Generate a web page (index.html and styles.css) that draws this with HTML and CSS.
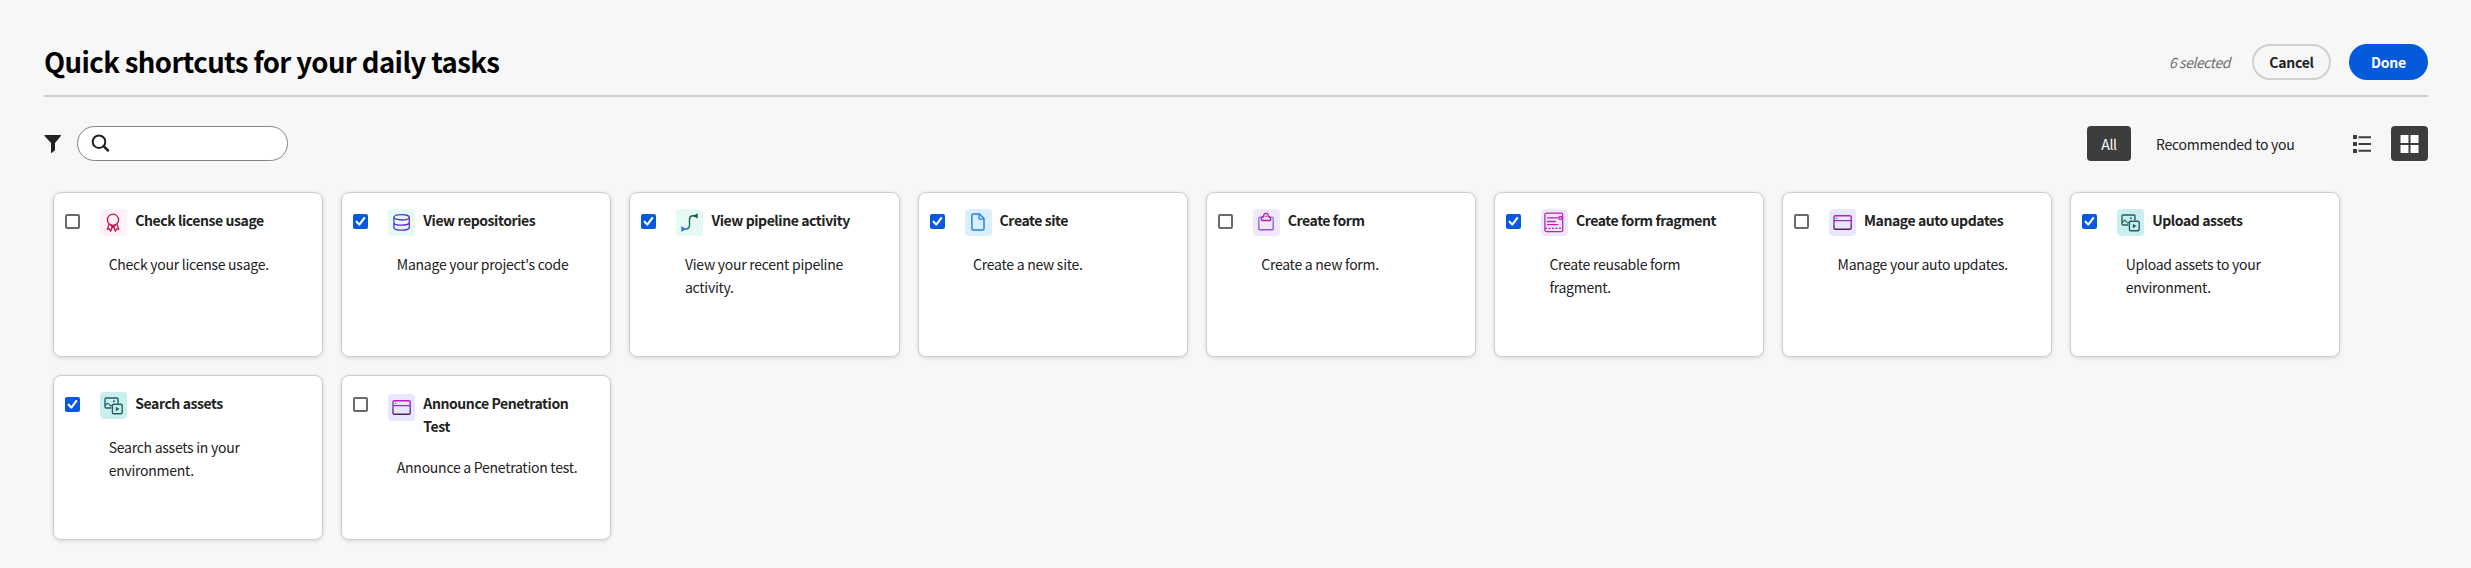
FILE: index.html
```html
<!DOCTYPE html>
<html lang="en">
<head>
<meta charset="utf-8">
<title>Quick shortcuts</title>
<link rel="stylesheet" href="styles.css">
</head>
<body>
<svg class="defs" width="0" height="0" aria-hidden="true">
  <defs>
    <linearGradient id="g-db" x1="0" y1="0" x2="1" y2="1"><stop offset="0" stop-color="#3b4fd0"/><stop offset=".5" stop-color="#6a1fd0"/><stop offset="1" stop-color="#5a35d8"/></linearGradient>
    <linearGradient id="g-pipe" gradientUnits="userSpaceOnUse" x1="6" y1="21" x2="20" y2="5"><stop offset="0" stop-color="#2f6fe0"/><stop offset=".45" stop-color="#17804f"/><stop offset="1" stop-color="#1c4f45"/></linearGradient>
    <linearGradient id="g-form" x1="0" y1="0" x2="0" y2="1"><stop offset="0" stop-color="#6e8cf5"/><stop offset="1" stop-color="#9a4fe0"/></linearGradient>
    <linearGradient id="g-win" gradientUnits="userSpaceOnUse" x1="0" y1="6" x2="0" y2="21"><stop offset="0" stop-color="#c01fb4"/><stop offset=".45" stop-color="#8238b8"/><stop offset="1" stop-color="#541a56"/></linearGradient>
  </defs>
  <symbol id="i-check" viewBox="0 0 15 15"><path d="M3.600 7.700l2.700 2.900 5-6.600" fill="none" stroke="#fff" stroke-width="2.100" stroke-linecap="round" stroke-linejoin="round"/></symbol>
  <symbol id="i-award" viewBox="0 0 27 27"><g fill="none" stroke="#bb1449" stroke-width="1.300" stroke-linejoin="round"><circle cx="13" cy="10.800" r="5.600"/><path d="M9.200 15.200l-2 5 2.100-.2 1.300 2.200 2-5.400M16.800 15.200l2 5-2.100-.2-1.300 2.200-2-5.400M10.400 15.800l2.600 2.800 2.600-2.800"/></g></symbol>
  <symbol id="i-db" viewBox="0 0 27 27"><g fill="none" stroke="url(#g-db)" stroke-width="1.300"><ellipse cx="13.600" cy="8.300" rx="7.700" ry="2.700"/><path d="M5.900 8.300v10.200c0 1.500 3.400 2.700 7.700 2.700s7.700-1.200 7.700-2.700V8.300M5.900 13.400c0 1.500 3.400 2.700 7.700 2.700s7.700-1.200 7.700-2.700"/></g></symbol>
  <symbol id="i-pipe" viewBox="0 0 27 27"><path d="M8 20h1.500c2.200 0 4-1.500 4-3.800V10.500c0-2.200 1.600-3.700 3.800-3.700H19" fill="none" stroke="url(#g-pipe)" stroke-width="1.500"/><path d="M5.300 17l4.600 3-4.600 3z" fill="#3673de"/><path d="M21.700 4.200v5.400L17 7z" fill="#1c5549"/></symbol>
  <symbol id="i-doc" viewBox="0 0 27 27"><g fill="none" stroke="#2680eb" stroke-width="1.500" stroke-linejoin="round"><path d="M8.200 4.900h6.300l4.500 4.700v10.100a1.300 1.300 0 0 1-1.300 1.300H8.200a1.300 1.300 0 0 1-1.300-1.300V6.200a1.300 1.300 0 0 1 1.300-1.300z"/><path d="M14 5v4.200a1 1 0 0 0 1 1h4" stroke-width="1.300"/></g></symbol>
  <symbol id="i-form" viewBox="0 0 27 27"><path d="M8.500 8.300H6.800a1 1 0 0 0-1 1v10.500a1 1 0 0 0 1 1h12.400a1 1 0 0 0 1-1V9.300a1 1 0 0 0-1-1h-1.700" fill="none" stroke="url(#g-form)" stroke-width="1.400"/><path d="M8.200 10.400c0-1.800 1-2.700 2.500-2.900a2.400 2.400 0 1 1 4.600 0c1.500.2 2.500 1.100 2.500 2.900 0 .7-.4 1.100-1 1.100H9.200c-.6 0-1-.4-1-1.100z" fill="#f1e7fb" stroke="#b91ab4" stroke-width="1.300"/><circle cx="13" cy="7.300" r=".8" fill="#b91ab4"/></symbol>
  <symbol id="i-frag" viewBox="0 0 27 27"><g fill="none" stroke="#b626b5" stroke-width="1.300"><rect x="3.900" y="4.100" width="17.800" height="18.500" rx="1.500"/><path d="M6.500 8.800h10.500M6.500 12.500h7.800M6.500 15.700h10.300" stroke-linecap="round"/><path d="M4 19.300h18" stroke-dasharray="2 1.500"/><circle cx="19.300" cy="9" r="1.500"/></g></symbol>
  <symbol id="i-win" viewBox="0 0 27 27"><g fill="none" stroke="url(#g-win)" stroke-width="1.400"><rect x="5" y="6.700" width="17.200" height="13.600" rx="1.300"/><path d="M5 11.700h17.200v.01" stroke-width="1.200"/></g><circle cx="7.500" cy="9.200" r=".8" fill="#2f7df0"/></symbol>
  <symbol id="i-asset" viewBox="0 0 27 27"><g fill="none" stroke="#245e63" stroke-width="1.400" stroke-linejoin="round"><path d="M11.300 16H6.200a1.200 1.200 0 0 1-1.200-1.200V7.200A1.200 1.200 0 0 1 6.200 6h10.600A1.200 1.200 0 0 1 18 7.200v4.300"/><path d="M5 13.500l2.600-2.300 3.300 3 1.200-1.200" stroke-width="1.100"/><rect x="12.400" y="12.200" width="9.800" height="9.600" rx="1.300"/></g><path d="M15.800 14.700v4.600l3.700-2.300z" fill="#245e63"/><circle cx="13.900" cy="9.200" r="1" fill="#245e63"/></symbol>
</svg>

<header class="header">
  <h1 class="title">Quick shortcuts for your daily tasks</h1>
  <span class="count">6 selected</span>
  <button class="btn btn-cancel">Cancel</button>
  <button class="btn btn-done">Done</button>
</header>

<div class="toolbar">
  <svg class="filter" width="18" height="18" viewBox="0 0 18 18"><path d="M1 0h15.400c.6 0 .8.600.4 1L11 8v7.200L7.600 18c-.3.200-.6 0-.6-.3V8L.6 1C.2.600.4 0 1 0z" fill="#222"/></svg>
  <label class="search">
    <svg width="19" height="19" viewBox="0 0 19 19"><circle cx="8" cy="7.700" r="6.300" fill="none" stroke="#222" stroke-width="2"/><path d="M12.600 12.200l4.400 4.300" stroke="#222" stroke-width="2.500" stroke-linecap="round"/></svg>
    <input class="search-input" type="text" aria-label="Search">
  </label>
  <button class="tab tab-active">All</button>
  <button class="tab tab-rec">Recommended to you</button>
  <button class="view view-list"><svg width="18" height="18" viewBox="0 0 18 18" fill="#3d3d3d"><path d="M0 0h4v4H0zM0 7h4v4H0zM0 14h4v4H0zM5.500 1.200H18v2H5.500zM5.500 8H18v2H5.500zM5.500 14.800H18v2H5.500z"/></svg></button>
  <button class="view view-active"><svg width="19" height="18" viewBox="0 0 19 18" fill="#fff"><path d="M.5 0h8v8h-8zM10.500 0h8v8h-8zM.5 10h8v8h-8zM10.500 10h8v8h-8z"/></svg></button>
</div>

<main class="grid">
  <article class="card"><span class="box"></span><div class="content"><div class="head"><svg class="icon pink"><use href="#i-award"/></svg><h2 class="name">Check license usage</h2></div><p class="desc">Check your license usage.</p></div></article>
  <article class="card"><span class="box on"><svg class="tick"><use href="#i-check"/></svg></span><div class="content"><div class="head"><svg class="icon mint"><use href="#i-db"/></svg><h2 class="name">View repositories</h2></div><p class="desc">Manage your project's code</p></div></article>
  <article class="card"><span class="box on"><svg class="tick"><use href="#i-check"/></svg></span><div class="content"><div class="head"><svg class="icon mint"><use href="#i-pipe"/></svg><h2 class="name">View pipeline activity</h2></div><p class="desc">View your recent pipeline activity.</p></div></article>
  <article class="card"><span class="box on"><svg class="tick"><use href="#i-check"/></svg></span><div class="content"><div class="head"><svg class="icon sky"><use href="#i-doc"/></svg><h2 class="name">Create site</h2></div><p class="desc">Create a new site.</p></div></article>
  <article class="card"><span class="box"></span><div class="content"><div class="head"><svg class="icon lilac"><use href="#i-form"/></svg><h2 class="name">Create form</h2></div><p class="desc">Create a new form.</p></div></article>
  <article class="card"><span class="box on"><svg class="tick"><use href="#i-check"/></svg></span><div class="content"><div class="head"><svg class="icon lilac"><use href="#i-frag"/></svg><h2 class="name">Create form fragment</h2></div><p class="desc">Create reusable form fragment.</p></div></article>
  <article class="card"><span class="box"></span><div class="content"><div class="head"><svg class="icon indigo"><use href="#i-win"/></svg><h2 class="name">Manage auto updates</h2></div><p class="desc">Manage your auto updates.</p></div></article>
  <article class="card"><span class="box on"><svg class="tick"><use href="#i-check"/></svg></span><div class="content"><div class="head"><svg class="icon teal"><use href="#i-asset"/></svg><h2 class="name">Upload assets</h2></div><p class="desc">Upload assets to your environment.</p></div></article>
  <article class="card"><span class="box on"><svg class="tick"><use href="#i-check"/></svg></span><div class="content"><div class="head"><svg class="icon teal"><use href="#i-asset"/></svg><h2 class="name">Search assets</h2></div><p class="desc">Search assets in your environment.</p></div></article>
  <article class="card"><span class="box"></span><div class="content"><div class="head tall"><svg class="icon indigo"><use href="#i-win"/></svg><h2 class="name">Announce Penetration Test</h2></div><p class="desc">Announce a Penetration test.</p></div></article>
</main>
</body>
</html>
```

FILE: styles.css
```css
* { box-sizing: border-box; }
body {
  margin: 0;
  padding: 44px 43px 0 44px;
  height: 568px;
  overflow: hidden;
  background: #f7f7f7;
  color: #222;
  font-family: "Noto Sans CJK SC", "Noto Sans", sans-serif;
  font-size: 14px;
  letter-spacing: -.26px;
}
.defs { position: absolute; }
button { font: inherit; letter-spacing: inherit; padding: 0; border: 0; background: none; color: inherit; }
h1, h2, p { margin: 0; }

.header {
  display: flex;
  height: 53px;
  border-bottom: 2px solid #d0d0d0;
}
.title {
  flex: 1;
  font-size: 27.500px;
  line-height: 34px;
  font-weight: 700;
  letter-spacing: -.6px;
  color: #000;
}
.count {
  margin-right: 22px;
  line-height: 36px;
  font-style: italic;
  letter-spacing: -.45px;
  color: #6e6e6e;
}
.btn {
  width: 79px;
  height: 36px;
  border-radius: 18px;
  font-weight: 700;
  line-height: 32px;
}
.btn-cancel { border: 2px solid #d0d0d0; margin-right: 18px; }
.btn-done { background: #055adb; color: #fff; }

.toolbar {
  display: flex;
  align-items: center;
  height: 35px;
  margin-top: 29px;
}
.filter { margin-right: 15px; }
.search {
  display: flex;
  align-items: center;
  width: 211px;
  height: 35px;
  padding-left: 13px;
  margin-right: auto;
  border: 1px solid #868686;
  border-radius: 18px;
  background: #fff;
}
.search-input { width: 160px; border: 0; outline: 0; background: none; font: inherit; }
.tab { height: 35px; line-height: 37px; }
.tab-active { width: 44px; border-radius: 4px; background: #3d3d3d; color: #fff; margin-right: 25px; }
.tab-rec { width: 140px; margin-right: 57px; text-align: left; white-space: nowrap; }
.view { display: flex; align-items: center; justify-content: center; height: 35px; }
.view-list { width: 18px; margin-right: 20px; }
.view-active { width: 37px; border-radius: 4px; background: #3d3d3d; }

.grid {
  display: grid;
  grid-template-columns: repeat(8, 270.150px);
  grid-auto-rows: 165px;
  gap: 18px;
  padding: 31px 0 0 9.200px;
}
.card {
  display: flex;
  padding: 16px 11px 0;
  border: 1px solid #cfcfcf;
  border-radius: 8px;
  background: #fff;
  box-shadow: 0 1px 4px rgba(0, 0, 0, .14);
}
.box {
  flex: none;
  width: 15px;
  height: 15px;
  margin: 5px 20px 0 0;
  border: 2px solid #6a6a6a;
  border-radius: 2px;
}
.box.on { border: 0; background: #055adb; }
.tick { display: block; width: 15px; height: 15px; }
.content { flex: 1; }
.head { display: flex; min-height: 27px; }
.tall { height: 47px; }
.tall .icon { margin-top: 2px; }
.icon { flex: none; width: 27px; height: 27px; margin-right: 8px; border-radius: 4px; }
.pink { background: #fff1f6; }
.mint { background: #e5faf5; }
.sky { background: #d9effe; }
.lilac { background: #f1e7fb; }
.indigo { background: #e7e8ff; }
.teal { background: #c9f0ee; }
.name { max-width: 160px; font-size: 14px; line-height: 23px; font-weight: 700; letter-spacing: -.42px; }
.desc { margin: 17px 0 0 8.500px; font-size: 14px; line-height: 23px; max-width: 190px; }
```
